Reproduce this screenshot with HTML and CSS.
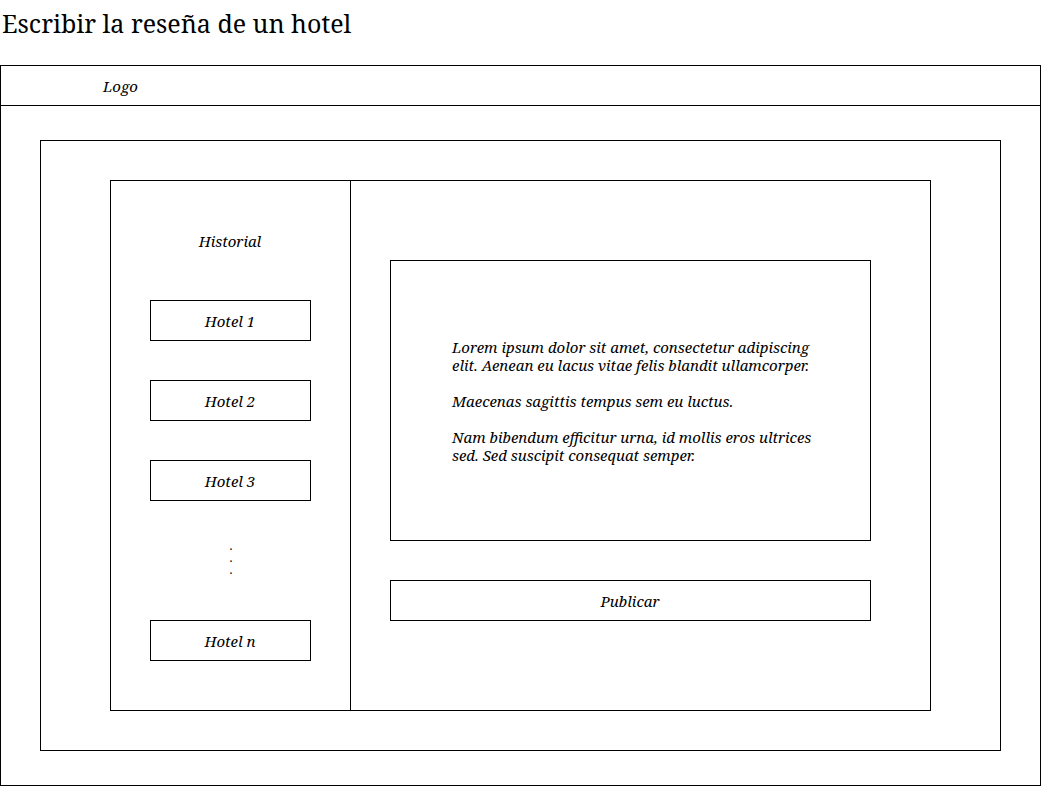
FILE: index.html
```html
<!DOCTYPE html>
<html lang="es">
<head>
<meta charset="utf-8">
<title>Escribir la reseña de un hotel</title>
<link rel="stylesheet" href="styles.css">
</head>
<body>
<h1 class="title">Escribir la reseña de un hotel</h1>
<div class="window">
  <header class="topbar"><a class="logo" href="#">Logo</a></header>
  <main class="content">
    <div class="panel">
      <nav class="history" aria-labelledby="history-title">
        <h2 class="history-title" id="history-title">Historial</h2>
        <button class="box" type="button">Hotel 1</button>
        <button class="box" type="button">Hotel 2</button>
        <button class="box" type="button">Hotel 3</button>
        <div class="more">.<br>.<br>.</div>
        <button class="box" type="button">Hotel n</button>
      </nav>
      <form class="review">
        <textarea class="review-text" aria-label="Reseña" spellcheck="false">Lorem ipsum dolor sit amet, consectetur adipiscing elit. Aenean eu lacus vitae felis blandit ullamcorper.

Maecenas sagittis tempus sem eu luctus.

Nam bibendum efficitur urna, id mollis eros ultrices sed. Sed suscipit consequat semper.</textarea>
        <button class="box" type="button">Publicar</button>
      </form>
    </div>
  </main>
</div>
</body>
</html>
```
FILE: styles.css
```css
* {
  box-sizing: border-box;
}

body {
  margin: 0;
  background: #fff;
  color: #000;
  font: italic 15px/18px "Noto Serif", "Droid Serif", "DejaVu Serif", serif;
}

.title {
  margin: 0;
  padding: 5px 2px 24px;
  font-size: 25px;
  font-style: normal;
  font-weight: 400;
  line-height: 36px;
}

.window {
  border: 1px solid #000;
}

.topbar {
  display: flex;
  align-items: center;
  height: 40px;
  padding: 0 102px;
  border-bottom: 1px solid #000;
}

.logo {
  color: inherit;
  text-decoration: none;
}

.content {
  margin: 34px 39px;
  padding: 39px 69px;
  border: 1px solid #000;
}

.panel {
  display: flex;
  border: 1px solid #000;
}

.history {
  display: flex;
  flex-direction: column;
  gap: 39px;
  width: 240px;
  padding: 40px 39px 49px;
  border-right: 1px solid #000;
}

.history-title {
  margin: 0;
  padding-right: 1px;
  font-size: 15px;
  font-weight: 400;
  line-height: 40px;
  text-align: center;
}

.box {
  width: 100%;
  height: 41px;
  padding: 0 1px 0 0;
  border: 1px solid #000;
  background: transparent;
  color: inherit;
  font: inherit;
  text-align: center;
}

.more {
  height: 41px;
  padding-left: 1px;
  font-size: 12px;
  font-style: normal;
  line-height: 12px;
  text-align: center;
}

.review {
  display: flex;
  flex: 1;
  flex-direction: column;
  gap: 39px;
  padding: 79px 59px 79px 39px;
}

.review-text {
  display: block;
  width: 100%;
  height: 281px;
  padding: 77px 56px 60px 61px;
  border: 1px solid #000;
  background: transparent;
  color: inherit;
  font: inherit;
  resize: none;
  overflow: hidden;
}
```
